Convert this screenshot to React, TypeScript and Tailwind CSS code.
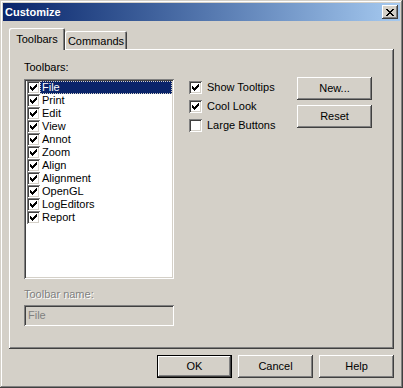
import clsx from "clsx";

const RAISED =
  "shadow-[inset_-1px_-1px_#404040,inset_1px_1px_#ffffff,inset_-2px_-2px_#808080,inset_2px_2px_#d4d0c8]";
const SUNKEN =
  "shadow-[inset_1px_1px_#808080,inset_-1px_-1px_#ffffff,inset_2px_2px_#404040,inset_-2px_-2px_#d4d0c8]";

const CHECK: [number, number][] = [
  [6, 0], [5, 1], [6, 1], [0, 2], [4, 2], [5, 2], [6, 2],
  [0, 3], [1, 3], [3, 3], [4, 3], [5, 3], [0, 4], [1, 4],
  [2, 4], [3, 4], [4, 4], [1, 5], [2, 5], [3, 5], [2, 6],
];

const CLOSE: [number, number][] = [
  [0, 0], [1, 0], [6, 0], [7, 0],
  [1, 1], [2, 1], [5, 1], [6, 1],
  [2, 2], [3, 2], [4, 2], [5, 2],
  [3, 3], [4, 3],
  [2, 4], [3, 4], [4, 4], [5, 4],
  [1, 5], [2, 5], [5, 5], [6, 5],
  [0, 6], [1, 6], [6, 6], [7, 6],
];

function PixelGlyph({ pixels, w, h }: { pixels: [number, number][]; w: number; h: number }) {
  return (
    <svg width={w} height={h} viewBox={`0 0 ${w} ${h}`} shapeRendering="crispEdges">
      {pixels.map(([x, y]) => (
        <rect key={`${x}-${y}`} x={x} y={y} width="1" height="1" fill="#000" />
      ))}
    </svg>
  );
}

function CheckBox({ checked }: { checked: boolean }) {
  return (
    <span className={clsx("flex h-[13px] w-[13px] shrink-0 items-center justify-center bg-white", SUNKEN)}>
      {checked && <PixelGlyph pixels={CHECK} w={7} h={7} />}
    </span>
  );
}

function Button({
  children,
  isDefault,
}: {
  children: React.ReactNode;
  isDefault?: boolean;
}) {
  return (
    <button
      type="button"
      className={clsx(
        "h-[23px] w-[75px] shrink-0 bg-[#d4d0c8] text-[11px] leading-none text-black",
        isDefault ? "border border-black" : "",
      )}
    >
      <span className={clsx("flex h-full w-full items-center justify-center", RAISED)}>
        {children}
      </span>
    </button>
  );
}

const toolbars = [
  "File",
  "Print",
  "Edit",
  "View",
  "Annot",
  "Zoom",
  "Align",
  "Alignment",
  "OpenGL",
  "LogEditors",
  "Report",
];

const options = [
  { label: "Show Tooltips", checked: true },
  { label: "Cool Look", checked: true },
  { label: "Large Buttons", checked: false },
];

export default function App() {
  return (
    <div
      className={clsx(
        "flex h-[388px] w-[403px] flex-col bg-[#d4d0c8] p-[3px] font-['Liberation_Sans',Arial,sans-serif] text-[11px] text-black",
        "shadow-[inset_-1px_-1px_#404040,inset_1px_1px_#d4d0c8,inset_-2px_-2px_#808080,inset_2px_2px_#ffffff]",
      )}
    >
      {/* title bar */}
      <div className="flex h-[18px] shrink-0 items-center justify-between bg-gradient-to-r from-[#0a246a] to-[#a6caf0] pl-[2px] pr-[2px]">
        <span className="text-[11px] font-bold text-white">Customize</span>
        <span className={clsx("flex h-[14px] w-[16px] items-center justify-center bg-[#d4d0c8]", RAISED)}>
          <PixelGlyph pixels={CLOSE} w={8} h={7} />
        </span>
      </div>

      <div className="flex flex-1 flex-col px-[6px] pt-[7px]">
        {/* tabs */}
        <div className="flex h-[21px] items-end">
          <div className="relative z-10 -mb-px flex h-[22px] w-[56px] items-start justify-center rounded-t-[2px] bg-[#d4d0c8] pt-[3px] shadow-[inset_1px_1px_#ffffff,inset_-1px_0_#404040,inset_-2px_0_#808080]">
            Toolbars
          </div>
          <div className="flex h-[18px] w-[62px] items-start justify-center rounded-t-[2px] pt-[2px] shadow-[inset_1px_1px_#ffffff,inset_-1px_0_#404040,inset_-2px_0_#808080]">
            Commands
          </div>
        </div>

        {/* panel */}
        <div className="flex h-[300px] shrink-0 items-start pl-[15px] shadow-[inset_-1px_-1px_#404040,inset_1px_1px_#ffffff,inset_-2px_-2px_#808080]">
          <div className="mt-[12px] flex w-[150px] flex-col">
            <span className="h-[13px] leading-[13px]">Toolbars:</span>
            <div className={clsx("mt-[5px] h-[200px] bg-white p-[2px]", SUNKEN)}>
              {toolbars.map((name, i) => (
                <div key={name} className="flex h-[13px] items-start pl-px">
                  <CheckBox checked />
                  {i === 0 ? (
                    <span className="flex h-[13px] flex-1 items-center border border-dotted border-[#d4d0c8] bg-[#0a246a] pl-px text-white">
                      {name}
                    </span>
                  ) : (
                    <span className="flex h-[13px] items-center pl-[2px]">{name}</span>
                  )}
                </div>
              ))}
            </div>
            <span className="mt-[9px] h-[13px] leading-[13px] text-[#808080] [text-shadow:1px_1px_0_#ffffff]">
              Toolbar name:
            </span>
            <div className={clsx("mt-[4px] flex h-[21px] items-center pl-[4px] text-[#808080]", SUNKEN)}>
              File
            </div>
          </div>

          <div className="ml-[15px] mt-[32px] flex w-[108px] flex-col gap-[6px]">
            {options.map((o) => (
              <div key={o.label} className="flex h-[13px] items-center gap-[5px]">
                <CheckBox checked={o.checked} />
                <span>{o.label}</span>
              </div>
            ))}
          </div>

          <div className="mt-[28px] flex flex-col gap-[5px]">
            <Button>New...</Button>
            <Button>Reset</Button>
          </div>
        </div>

        {/* dialog buttons */}
        <div className="mt-[6px] flex justify-end gap-[6px]">
          <Button isDefault>OK</Button>
          <Button>Cancel</Button>
          <Button>Help</Button>
        </div>
      </div>
    </div>
  );
}
